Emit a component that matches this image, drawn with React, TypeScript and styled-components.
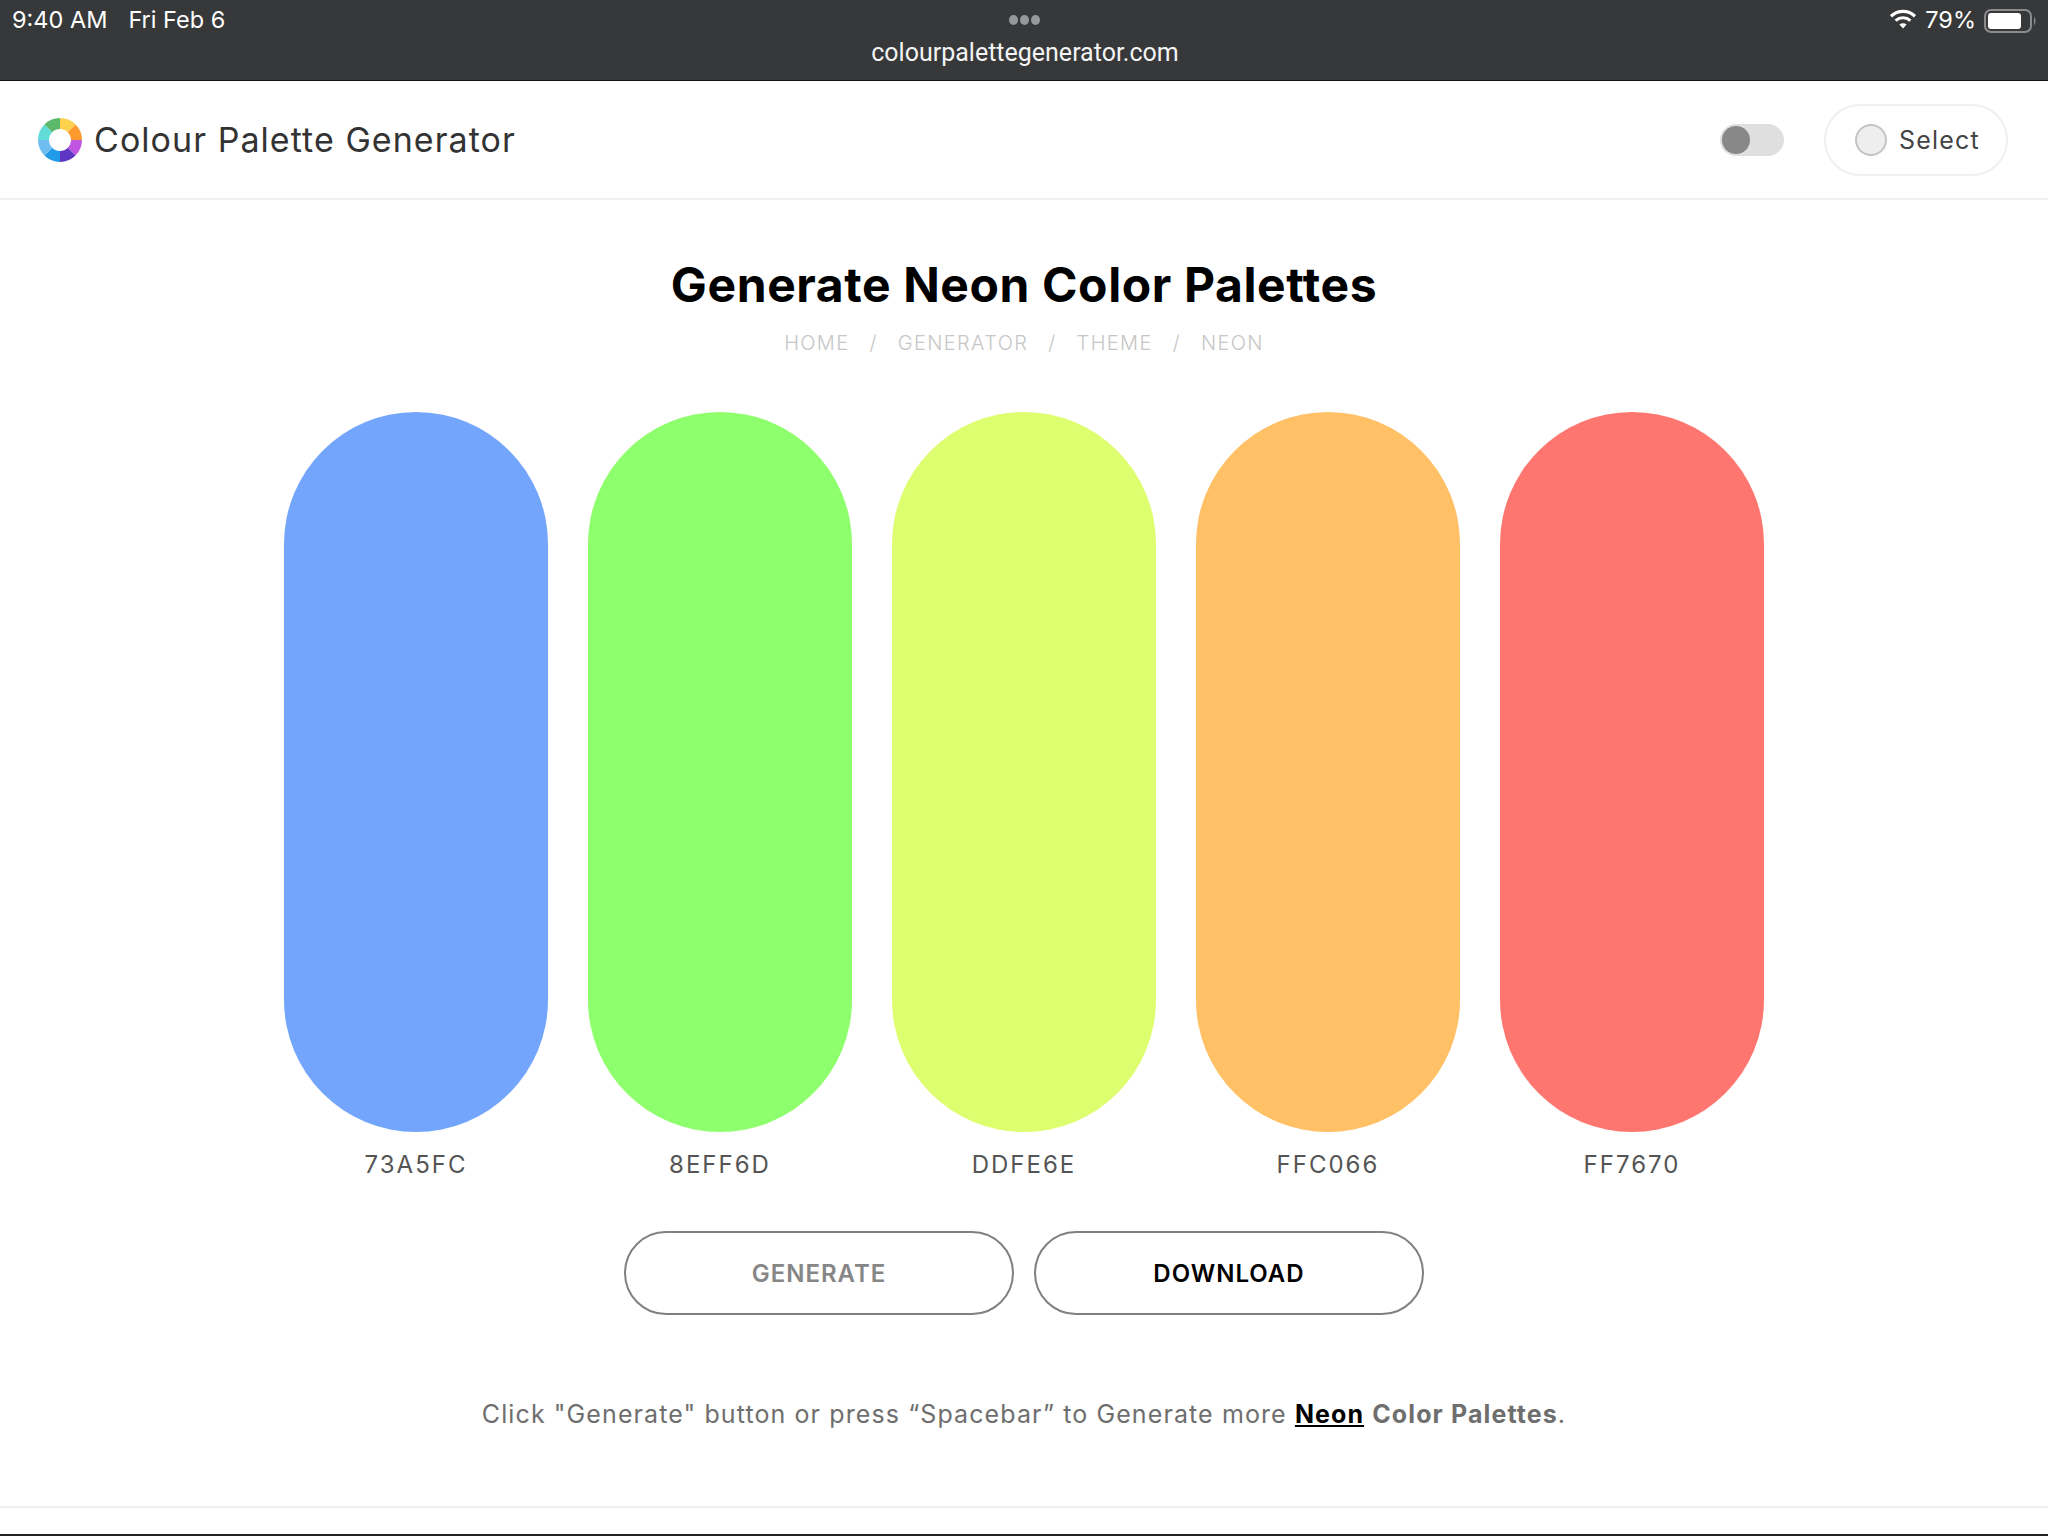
import React from "react";
import styled, { createGlobalStyle } from "styled-components";

const Global = createGlobalStyle`
  html, body { margin: 0; padding: 0; background: #fff; }
  * { box-sizing: border-box; }
  body { font-family: "Inter", "Liberation Sans", sans-serif; }
`;
const Page = styled.div`
  width: 2048px; height: 1536px; overflow: hidden; background: #fff;
  display: flex; flex-direction: column;
  border-bottom: 2px solid #222;
`;
const StatusBar = styled.div`
  height: 81px; flex: none; background: #37383a; border-bottom: 1px solid #111;
  display: grid; grid-template-columns: 1fr auto 1fr; padding: 0 10px 0 12px; color: #fff;
`;
const StatusLeft = styled.div`
  display: flex; gap: 21px; font: 400 23.5px/20px "Inter", sans-serif; padding-top: 10px;
`;
const StatusCenter = styled.div`
  display: flex; flex-direction: column; align-items: center; padding-top: 15px;
`;
const Dots = styled.div`
  display: flex; gap: 2px; height: 10px;
  i { width: 9px; height: 10px; border-radius: 50%; background: #97989a; display: block; }
`;
const Url = styled.div`
  font: 400 25px/30px "Roboto", sans-serif; margin-top: 13px; color: #f4f4f4;
`;
const StatusRight = styled.div`
  display: flex; justify-content: flex-end; align-items: flex-start; gap: 8px;
  padding-top: 8px; font: 400 23.5px/24px "Inter", sans-serif;
`;
const Header = styled.header`
  height: 119px; flex: none; border-bottom: 2px solid #f0f0f0;
  display: flex; align-items: center; padding: 0 40px 0 37px;
`;
const Brand = styled.div`
  display: flex; align-items: center; gap: 11px; flex: 1;
  font-size: 34px; letter-spacing: 1.05px; color: #333;
`;
const Toggle = styled.div`
  width: 64px; height: 32px; border-radius: 16px; background: #dfdfdf; position: relative;
  margin-right: 40px;
  &::before { content: ""; position: absolute; left: 2px; top: 2px; width: 28px; height: 28px; border-radius: 50%; background: #888; }
`;
const Select = styled.div`
  width: 184px; height: 72px; border: 2px solid #f0f0f0; border-radius: 36px;
  display: flex; align-items: center; gap: 12px; padding-left: 29px;
  font-size: 25px; letter-spacing: 1.2px; color: #444;
`;
const Swatch = styled.span`
  width: 32px; height: 32px; border-radius: 50%; background: #eee; border: 2px solid #c4c4c4;
`;
const Main = styled.main`
  flex: 1; display: flex; flex-direction: column; align-items: center;
`;
const Title = styled.h1`
  margin: 58px 0 0; font-size: 48px; line-height: 54px; font-weight: 700; letter-spacing: 0.6px; color: #000;
`;
const Crumbs = styled.nav`
  margin-top: 19px; display: flex; gap: 20px; height: 24px; align-items: center;
  font-size: 20px; letter-spacing: 1.35px; color: #c6c6c6; font-weight: 300;
`;
const Palette = styled.div`
  margin-top: 57px; display: flex; gap: 40px;
`;
const Column = styled.div`
  width: 264px; display: flex; flex-direction: column; align-items: center;
`;
const Pill = styled.div<{ $c: string }>`
  width: 264px; height: 720px; border-radius: 132px; background: ${p => p.$c};
`;
const Code = styled.div`
  margin-top: 19px; font-size: 24px; line-height: 28px; letter-spacing: 2px; color: #555; font-weight: 400;
`;
const Buttons = styled.div`
  margin-top: 52px; display: flex; gap: 20px;
`;
const Btn = styled.div<{ $muted?: boolean }>`
  width: 390px; height: 84px; border-radius: 42px; border: 2px solid #808080;
  display: flex; align-items: center; justify-content: center;
  font-size: 24px; font-weight: 600; letter-spacing: 1px;
  color: ${p => (p.$muted ? "#868686" : "#000")};
`;
const Note = styled.p`
  margin: 83px 0 0; font-size: 25px; line-height: 32px; letter-spacing: 1.1px; color: #6e6e6e;
  a { color: #000; font-weight: 700; text-decoration: underline; }
  b { font-weight: 700; }
`;
const Rule = styled.div`
  height: 2px; flex: none; background: #eee; margin-bottom: 26px;
`;

const seg = (i: number, c: string) => {
  const R = 22, r = 11, cx = 23, cy = 23;
  const a0 = (i * 45 - 90) * Math.PI / 180, a1 = ((i + 1) * 45 - 90) * Math.PI / 180;
  const p = (rad: number, a: number) => `${(cx + rad * Math.cos(a)).toFixed(2)} ${(cy + rad * Math.sin(a)).toFixed(2)}`;
  return <path key={i} fill={c} d={`M${p(r, a0)}L${p(R, a0)}A${R} ${R} 0 0 1 ${p(R, a1)}L${p(r, a1)}A${r} ${r} 0 0 0 ${p(r, a0)}Z`} />;
};
const Logo = () => (
  <svg width="46" height="46" viewBox="0 0 46 46">
    {["#fdd24e", "#fd9a2e", "#bf55e0", "#5f35c4", "#1f9be8", "#6fbdf0", "#62dcd6", "#5cb96a"].map((c, i) => seg(i, c))}
  </svg>
);
const Wifi = () => (
  <svg width="28" height="22" viewBox="0 0 28 22" fill="none" stroke="#fff" strokeWidth="3.2">
    <path d="M2 8.2C9 1.8 19 1.8 26 8.2" />
    <path d="M6.6 12.6c4.4-3.8 10.4-3.8 14.8 0" />
    <path d="M14 20.5l-3.6-4c2.2-1.6 5-1.6 7.2 0z" fill="#fff" stroke="none" />
  </svg>
);
const Battery = () => (
  <svg width="54" height="26" viewBox="0 0 54 26">
    <rect x="1" y="2" width="46" height="22" rx="6" fill="none" stroke="#8a8b8d" strokeWidth="2" />
    <rect x="4" y="5" width="33" height="16" rx="3" fill="#fff" />
    <path d="M50 9c2 1 2 7 0 8z" fill="#8a8b8d" />
  </svg>
);

const colors: [string, string][] = [
  ["#73A5FC", "73A5FC"], ["#8EFF6D", "8EFF6D"], ["#DDFE6E", "DDFE6E"], ["#FFC066", "FFC066"], ["#FF7670", "FF7670"],
];

export default function App() {
  return (
    <Page>
      <Global />
      <StatusBar>
        <StatusLeft><span>9:40 AM</span><span>Fri Feb 6</span></StatusLeft>
        <StatusCenter>
          <Dots><i /><i /><i /></Dots>
          <Url>colourpalettegenerator.com</Url>
        </StatusCenter>
        <StatusRight><Wifi /><span>79%</span><Battery /></StatusRight>
      </StatusBar>
      <Header>
        <Brand><Logo />Colour Palette Generator</Brand>
        <Toggle />
        <Select><Swatch />Select</Select>
      </Header>
      <Main>
        <Title>Generate Neon Color Palettes</Title>
        <Crumbs><span>HOME</span><span>/</span><span>GENERATOR</span><span>/</span><span>THEME</span><span>/</span><span>NEON</span></Crumbs>
        <Palette>
          {colors.map(([c, t]) => (
            <Column key={t}><Pill $c={c} /><Code>{t}</Code></Column>
          ))}
        </Palette>
        <Buttons><Btn $muted>GENERATE</Btn><Btn>DOWNLOAD</Btn></Buttons>
        <Note>Click "Generate" button or press “Spacebar” to Generate more <a>Neon</a> <b>Color Palettes</b>.</Note>
      </Main>
      <Rule />
    </Page>
  );
}
